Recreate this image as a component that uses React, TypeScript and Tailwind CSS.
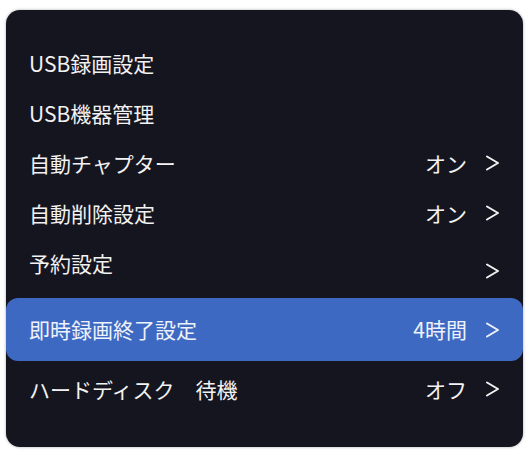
const rows: { label: string; value?: string; chevron: boolean; active?: boolean; h: string; low?: boolean }[] = [
  { label: "USB録画設定", chevron: false, h: "h-[50px]" },
  { label: "USB機器管理", chevron: false, h: "h-[50px]" },
  { label: "自動チャプター", value: "オン", chevron: true, h: "h-[50px]" },
  { label: "自動削除設定", value: "オン", chevron: true, h: "h-[50px]" },
  { label: "予約設定", chevron: true, h: "h-[50px]", low: true },
  { label: "即時録画終了設定", value: "4時間", chevron: true, active: true, h: "h-[63px]" },
  { label: "ハードディスク　待機", value: "オフ", chevron: true, h: "h-[56px]" },
];

function Chevron({ low }: { low?: boolean }) {
  return (
    <svg
      width="15"
      height="16"
      viewBox="0 0 15 16"
      className={low ? "translate-y-2" : ""}
      fill="none"
      stroke="currentColor"
      strokeWidth="2"
      strokeLinecap="round"
      strokeLinejoin="round"
    >
      <path d="M2 1.5 L13 8 L2 14.5" />
    </svg>
  );
}

export default function App() {
  return (
    <div className="h-[454px] w-[529px] bg-white pl-[6px] pt-[10px]">
      <div
        className="flex h-[437px] w-[517px] flex-col rounded-[14px] bg-[#15151f] pb-[30px] pt-[28px] text-[21px] text-[#f2f2f2] shadow-[0_0_3px_rgba(0,0,0,0.35)]"
        style={{ fontFamily: '"Noto Sans CJK JP", Roboto, sans-serif' }}
      >
        {rows.map((row, i) => (
          <div
            key={row.label}
            className={`flex items-center justify-between pl-[23px] pr-[23px] ${row.h} ${
              row.active ? "mt-[10px] rounded-[12px] bg-[#3e69c2] text-[#eef2fb]" : ""
            }`}
          >
            <span className="leading-none">{row.label}</span>
            <div className="flex items-center gap-[18px]">
              {row.value && <span className="leading-none">{row.value}</span>}
              {row.chevron && <Chevron low={row.low} />}
            </div>
          </div>
        ))}
      </div>
    </div>
  );
}
